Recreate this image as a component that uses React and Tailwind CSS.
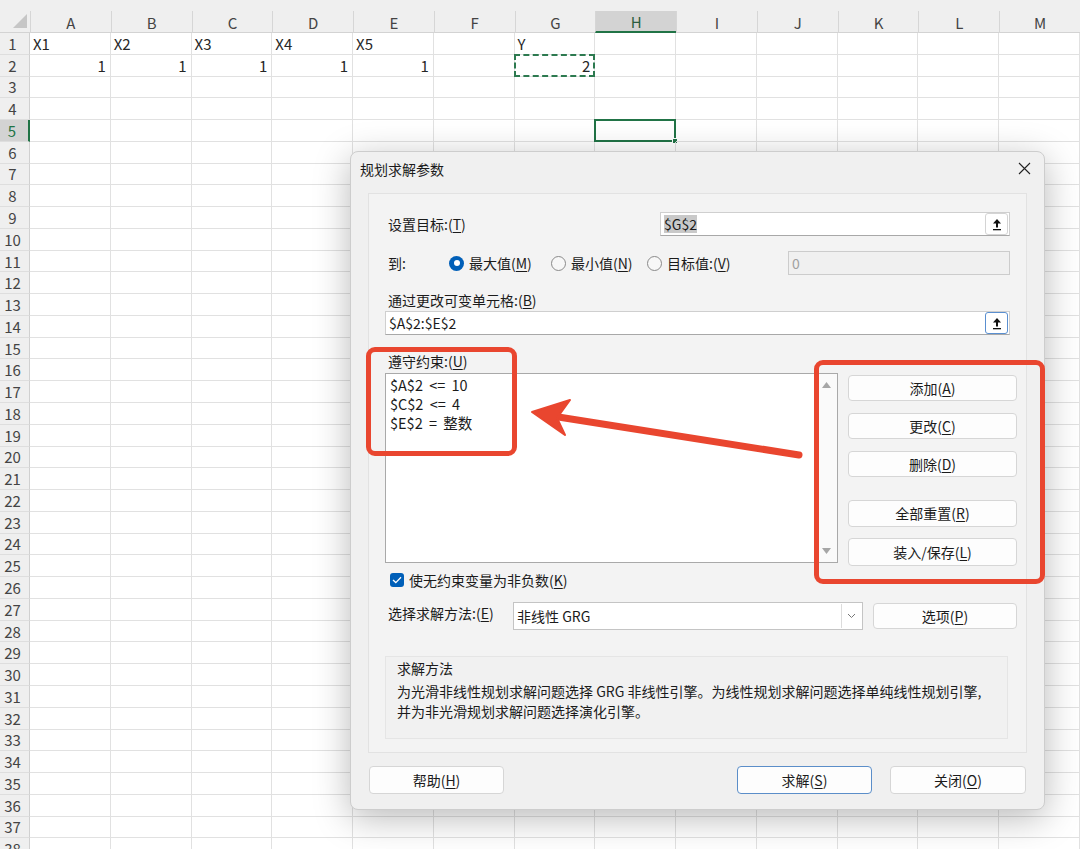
import React from "react";

const COLS = ["A", "B", "C", "D", "E", "F", "G", "H", "I", "J", "K", "L", "M"];
const DATA = {
  1: { A: "X1", B: "X2", C: "X3", D: "X4", E: "X5", G: "Y" },
  2: { A: "1", B: "1", C: "1", D: "1", E: "1", G: "2" },
};
const ROWS = Array.from({ length: 38 }, (_, i) => i + 1);

function UpButton({ focused }) {
  return (
    <div
      className={
        "w-[23px] h-[22px] flex items-center justify-center rounded-[3px] bg-white border " +
        (focused ? "border-[#5a8fd0]" : "border-[#d4d4d4]")
      }
    >
      <svg width="10" height="13" viewBox="0 0 10 13">
        <polygon points="5,1 9,5.5 1,5.5" fill="#111" />
        <rect x="4" y="5" width="2" height="4.5" fill="#111" />
        <rect x="1" y="11" width="8" height="1.3" fill="#111" />
      </svg>
    </div>
  );
}

function Btn({ children, className = "" }) {
  return (
    <div
      className={
        "flex items-center justify-center bg-[#fdfdfd] border border-[#d6d6d6] rounded-[4px] text-[14px] text-[#1b1b1b] " +
        className
      }
    >
      {children}
    </div>
  );
}

function Radio({ checked }) {
  if (checked)
    return (
      <div className="w-[15px] h-[15px] rounded-full bg-[#005fb8] flex items-center justify-center">
        <div className="w-[6px] h-[6px] rounded-full bg-white" />
      </div>
    );
  return <div className="w-[15px] h-[15px] rounded-full border border-[#8a8a8a] bg-[#f7f7f7]" />;
}

function U({ children }) {
  return <span className="underline underline-offset-[2px]">{children}</span>;
}

export default function App() {
  return (
    <div className="relative w-[1080px] h-[849px] overflow-hidden bg-white font-['Noto_Sans_CJK_SC',sans-serif]">
      {/* Spreadsheet */}
      <div className="flex flex-col">
        <div className="flex h-[33px] bg-[#efefef] border-b border-[#d3d3d3]">
          <div className="w-[30px] h-[33px] flex items-end justify-end pr-[3px] pb-[5px]">
            <svg width="14" height="14" viewBox="0 0 14 14">
              <polygon points="14,0 14,14 0,14" fill="#c6c6c6" />
            </svg>
          </div>
          {COLS.map((c) => (
            <div key={c} className="w-[80.77px] h-[33px] pt-[11px]">
              <div
                className={
                  "h-[22px] border-l border-[#d6d6d6] flex items-center justify-center text-[15px] leading-none " +
                  (c === "H"
                    ? "bg-[#d3d3d3] border-b-2 border-b-[#217346] text-[#2a5e40]"
                    : "text-[#444]")
                }
              >
                {c}
              </div>
            </div>
          ))}
        </div>
        {ROWS.map((r) => (
          <div key={r} className="flex h-[21.78px]">
            <div
              className={
                "w-[30px] h-full flex items-center justify-center pr-[4px] text-[15px] leading-none border-b border-[#dedede] " +
                (r === 5
                  ? "bg-[#d3d3d3] border-r-2 border-r-[#217346] text-[#217346]"
                  : "bg-[#efefef] border-r border-r-[#d0d0d0] text-[#444]")
              }
            >
              {r}
            </div>
            {COLS.map((c) => {
              const v = DATA[r] && DATA[r][c];
              const right = r === 2;
              return (
                <div
                  key={c}
                  className={
                    "relative w-[80.77px] h-full border-r border-b border-[#e1e1e1] flex items-center text-[15px] leading-none text-[#262626] " +
                    (right ? "justify-end pr-[4px]" : "pl-[3px]")
                  }
                >
                  {v}
                  {r === 2 && c === "G" && (
                    <div className="absolute left-[-1px] top-[-1px] right-[-1px] bottom-[-1px] border-2 border-dashed border-[#2d7a50]" />
                  )}
                  {r === 5 && c === "H" && (
                    <div className="absolute left-[-1px] top-[-1px] right-[-1px] bottom-[-1px] border-2 border-[#217346]">
                      <div className="absolute right-[-4px] bottom-[-4px] w-[6px] h-[6px] bg-[#217346] border border-white" />
                    </div>
                  )}
                </div>
              );
            })}
          </div>
        ))}
      </div>

      {/* Dialog */}
      <div className="absolute left-[350px] top-[151px] w-[695px] h-[659px] rounded-[8px] bg-[#f0f0f0] border border-[#cdcdcd] shadow-[0_8px_36px_rgba(0,0,0,0.28)] flex flex-col text-[#1b1b1b]">
        <div className="h-[33px] flex items-center justify-between pl-[9px] pr-[13px]">
          <span className="text-[14px] leading-none">规划求解参数</span>
          <svg width="13" height="13" viewBox="0 0 13 13">
            <path d="M1 1 L12 12 M12 1 L1 12" stroke="#222" strokeWidth="1.1" />
          </svg>
        </div>

        <div className="ml-[17px] mt-[8px] w-[659px] h-[560px] border border-[#e2e2e2] bg-[#f3f3f3] pl-[16px] pr-[16px] pt-[18px] flex flex-col text-[14px]">
          {/* Target */}
          <div className="flex items-center h-[24px]">
            <div className="w-[275px] pl-[3px] leading-none">
              设置目标:(<U>T</U>)
            </div>
            <div className="flex-1 h-[24px] bg-white border border-[#cfcfcf] border-b-[#a8a8a8] flex items-center justify-between pl-[3px] pr-[1px]">
              <span className="bg-[#c9c9c9] leading-[18px] text-[14px]">$G$2</span>
              <UpButton />
            </div>
          </div>

          {/* To */}
          <div className="flex items-center h-[24px] mt-[15px]">
            <div className="w-[64px] pl-[3px] leading-none">到:</div>
            <div className="w-[102px] flex items-center gap-[5px]">
              <Radio checked />
              <span className="leading-none">
                最大值(<U>M</U>)
              </span>
            </div>
            <div className="w-[96px] flex items-center gap-[5px]">
              <Radio />
              <span className="leading-none">
                最小值(<U>N</U>)
              </span>
            </div>
            <div className="w-[141px] flex items-center gap-[5px]">
              <Radio />
              <span className="leading-none">
                目标值:(<U>V</U>)
              </span>
            </div>
            <div className="flex-1 h-[24px] bg-[#f0f0f0] border border-[#cccccc] flex items-center pl-[3px] text-[#a0a0a0]">
              0
            </div>
          </div>

          {/* Changing cells */}
          <div className="mt-[15px] h-[20px] flex items-center pl-[3px] leading-none">
            通过更改可变单元格:(<U>B</U>)
          </div>
          <div className="mt-[1px] h-[24px] bg-white border border-[#cfcfcf] border-b-[#a8a8a8] flex items-center justify-between pl-[3px] pr-[1px]">
            <span className="leading-none">$A$2:$E$2</span>
            <UpButton focused />
          </div>

          {/* Constraints */}
          <div className="mt-[16px] h-[20px] flex items-center pl-[3px] leading-none">
            遵守约束:(<U>U</U>)
          </div>
          <div className="mt-[2px] flex mr-[-7px]">
            <div className="w-[453px] h-[190px] bg-white border border-[#a9a9a9] flex">
              <div className="flex-1 pl-[4px] pt-[1px] flex flex-col leading-[19px] text-[14.5px] [word-spacing:3px]">
                <span>$A$2 &lt;= 10</span>
                <span>$C$2 &lt;= 4</span>
                <span>$E$2 = 整数</span>
              </div>
              <div className="w-[22px] h-full bg-[#fafafa] flex flex-col items-center justify-between py-[8px]">
                <svg width="9" height="6" viewBox="0 0 9 6">
                  <polygon points="4.5,0 9,6 0,6" fill="#a6a6a6" />
                </svg>
                <svg width="9" height="6" viewBox="0 0 9 6">
                  <polygon points="0,0 9,0 4.5,6" fill="#a6a6a6" />
                </svg>
              </div>
            </div>
            <div className="ml-[10px] w-[169px] pt-[2px] flex flex-col">
              <Btn className="h-[26px]">
                添加(<U>A</U>)
              </Btn>
              <Btn className="h-[26px] mt-[12px]">
                更改(<U>C</U>)
              </Btn>
              <Btn className="h-[26px] mt-[12px]">
                删除(<U>D</U>)
              </Btn>
              <Btn className="h-[27px] mt-[23px]">
                全部重置(<U>R</U>)
              </Btn>
              <Btn className="h-[28px] mt-[11px]">
                装入/保存(<U>L</U>)
              </Btn>
            </div>
          </div>

          {/* Checkbox */}
          <div className="mt-[4px] h-[20px] flex items-center pl-[5px]">
            <div className="w-[14px] h-[14px] rounded-[3px] bg-[#005fb8] flex items-center justify-center">
              <svg width="10" height="8" viewBox="0 0 10 8">
                <path d="M1 4 L3.8 6.6 L9 1.3" stroke="white" strokeWidth="1.3" fill="none" />
              </svg>
            </div>
            <span className="ml-[5px] leading-none">
              使无约束变量为非负数(<U>K</U>)
            </span>
          </div>

          {/* Method */}
          <div className="mt-[12px] flex items-center h-[28px] mr-[-7px]">
            <div className="w-[128px] pl-[3px] leading-none self-start pt-[4px]">
              选择求解方法:(<U>E</U>)
            </div>
            <div className="w-[350px] h-[28px] bg-white border border-[#c4c4c4] flex items-center">
              <span className="flex-1 pl-[3px] leading-none">非线性 GRG</span>
              <div className="w-[20px] h-[24px] border-l border-[#dcdcdc] mr-[1px] flex items-center justify-center">
                <svg width="9" height="6" viewBox="0 0 9 6">
                  <path d="M1 1 L4.5 4.5 L8 1" stroke="#777" strokeWidth="1" fill="none" />
                </svg>
              </div>
            </div>
            <Btn className="ml-[10px] w-[144px] h-[26px]">
              选项(<U>P</U>)
            </Btn>
          </div>

          {/* Method description */}
          <div className="mt-[26px] w-[623px] h-[83px] border border-[#e5e5e5] bg-[#f1f1f1] pl-[11px] pt-[1px] flex flex-col leading-[20px]">
            <span>求解方法</span>
            <span className="mt-[3px]">
              为光滑非线性规划求解问题选择 GRG 非线性引擎。为线性规划求解问题选择单纯线性规划引擎,
            </span>
            <span>并为非光滑规划求解问题选择演化引擎。</span>
          </div>
        </div>

        {/* Bottom buttons */}
        <div className="mt-[13px] flex items-center pl-[18px] pr-[18px]">
          <Btn className="w-[135px] h-[28px]">
            帮助(<U>H</U>)
          </Btn>
          <div className="flex-1" />
          <Btn className="w-[135px] h-[28px] !border-[#5b8ec9]">
            求解(<U>S</U>)
          </Btn>
          <Btn className="ml-[18px] w-[136px] h-[28px]">
            关闭(<U>O</U>)
          </Btn>
        </div>
      </div>

      {/* Red annotations */}
      <div className="absolute left-[366px] top-[347px] w-[151px] h-[109px] border-[5px] border-[#e9462f] rounded-[9px]" />
      <div className="absolute left-[814px] top-[360px] w-[231px] h-[224px] border-[5px] border-[#e9462f] rounded-[9px]" />
      <svg className="absolute left-0 top-0 pointer-events-none" width="1080" height="849" viewBox="0 0 1080 849">
        <line x1="799" y1="455" x2="552" y2="416" stroke="#e9462f" strokeWidth="7" strokeLinecap="round" />
        <polygon points="532,412 570,400 557,418 565,435" fill="#e9462f" stroke="#e9462f" strokeWidth="2" strokeLinejoin="round" />
      </svg>
    </div>
  );
}
